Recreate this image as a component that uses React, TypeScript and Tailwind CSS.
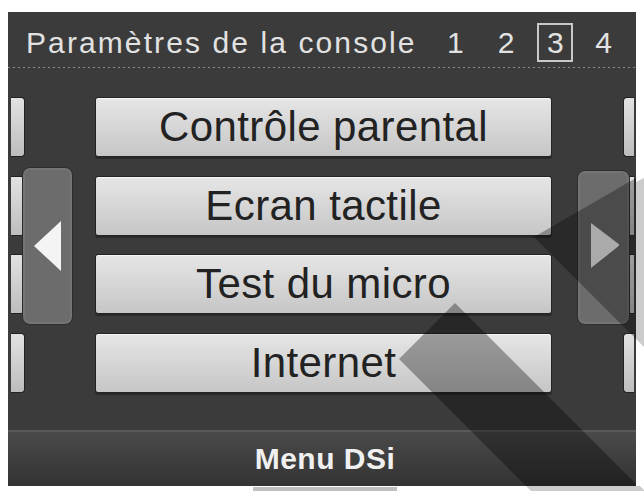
const font = { fontFamily: '"Liberation Sans", Arial, sans-serif' };

const rows = ["Contrôle parental", "Ecran tactile", "Test du micro", "Internet"];

function SideTab({ side }: { side: "left" | "right" }) {
  return (
    <div
      className={
        side === "left"
          ? "h-[60px] w-[14px] rounded-r-[4px] border border-l-0 border-[#222] bg-linear-to-b from-[#e2e2e2] to-[#bdbdbd]"
          : "h-[60px] w-[11px] rounded-l-[4px] border border-r-0 border-[#222] bg-linear-to-b from-[#e2e2e2] to-[#bdbdbd]"
      }
    />
  );
}

function ArrowPanel({ dir }: { dir: "left" | "right" }) {
  return (
    <div className="flex h-full w-full items-center justify-center rounded-[8px] border border-[#2e2e2e] bg-[#6c6c6c] shadow-[inset_0_0_0_2px_#747474]">
      <svg width="30" height="52" viewBox="0 0 30 52">
        {dir === "left" ? (
          <polygon points="1,26 28,1 28,51" fill="#f4f4f4" />
        ) : (
          <polygon points="2,1 2,46 31,23" fill="#f4f4f4" />
        )}
      </svg>
    </div>
  );
}

export default function App() {
  return (
    <div className="relative h-[491px] w-[644px] overflow-hidden bg-white pl-[8px] pt-[12px]" style={font}>
      <div className="flex h-[474px] w-[628px] flex-col bg-[#3b3b3b]">
        {/* header */}
        <div className="flex h-[55px] items-center pl-[18px] pr-[24px] pt-[6px] text-[30px] leading-none text-[#e2e2e2]">
          <span className="tracking-[2.1px]">Paramètres de la console</span>
          <div className="ml-auto flex items-center">
            <span>1</span>
            <span className="ml-[34px]">2</span>
            <span className="ml-[23px] flex h-[39px] w-[36px] items-center justify-center border-2 border-[#c8c8c8]">3</span>
            <span className="ml-[22px]">4</span>
          </div>
        </div>
        <div className="h-px bg-[repeating-linear-gradient(90deg,#8c8c8c_0_2px,transparent_2px_5px)]" />

        {/* main */}
        <div className="flex h-[362px] pt-[29px]">
          <div className="relative w-[87px]">
            <div className="flex flex-col gap-[18.67px] pl-[3px]">
              {rows.map((r) => (
                <SideTab key={r} side="left" />
              ))}
            </div>
            <div className="absolute left-[14px] top-[70px] h-[158px] w-[51px]">
              <ArrowPanel dir="left" />
            </div>
          </div>

          <div className="flex w-[457px] flex-col gap-[18.67px]">
            {rows.map((r) => (
              <div
                key={r}
                className="flex h-[60px] items-center justify-center rounded-[3px] border border-[#232323] bg-linear-to-b from-[#e6e6e6] to-[#c6c6c6] text-[42px] leading-none tracking-[0.4px] text-[#222] shadow-[inset_0_1px_0_#f7f7f7,0_2px_0_#2a2a2a]"
              >
                {r}
              </div>
            ))}
          </div>

          <div className="relative flex-1">
            <div className="flex flex-col items-end gap-[18.67px] pr-[2px]">
              {rows.map((r) => (
                <SideTab key={r} side="right" />
              ))}
            </div>
            <div className="absolute left-[25px] top-[73px] h-[155px] w-[53px]">
              <ArrowPanel dir="right" />
            </div>
          </div>
        </div>

        {/* bottom bar */}
        <div className="flex h-[56px] items-center justify-center border-t-2 border-[#5a5a5a] bg-linear-to-b from-[#4a4a4a] to-[#333] pl-[6px] text-[30px] font-bold leading-none tracking-[0.5px] text-[#f0f0f0]">
          Menu DSi
        </div>
      </div>

      {/* diagonal shading bands lying over the screen */}
      <svg className="pointer-events-none absolute inset-0" width="644" height="491" viewBox="0 0 644 491">
        <polygon points="399,359 455,303 636,484 636,486 526,486" fill="#000" fillOpacity="0.33" />
        <polygon points="534,237 636,178 636,339" fill="#000" fillOpacity="0.3" />
        <polygon points="636,182 644,178 644,347 636,339" fill="#000" fillOpacity="0.2" />
        <polygon points="526,486 640,486 644,490 644,491 531,491" fill="#000" fillOpacity="0.2" />
        <rect x="253" y="487" width="144" height="4" fill="#000" fillOpacity="0.25" />
      </svg>
    </div>
  );
}
